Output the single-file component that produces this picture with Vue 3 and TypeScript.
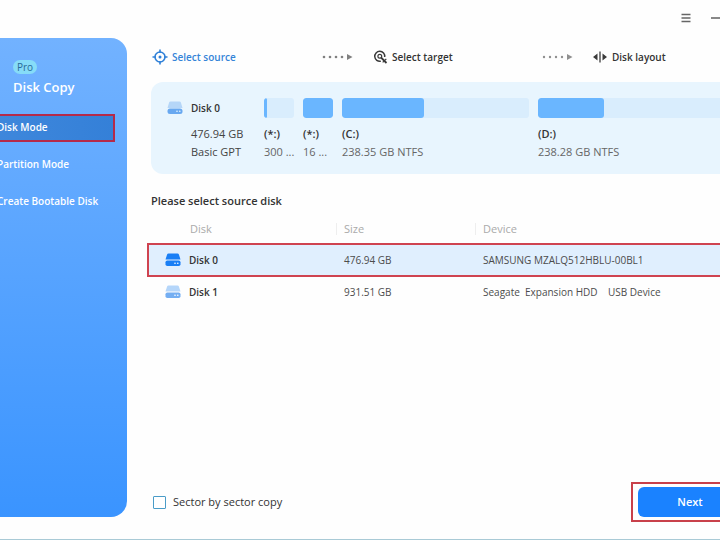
<script setup lang="ts">
import { ref } from 'vue'

interface Partition {
  letter: string
  size: string
  used: number
  kind: 'small' | 'medium' | 'large'
}

interface Disk {
  name: string
  size: string
  device: string
}

const modes = ['Disk Mode', 'Partition Mode', 'Create Bootable Disk']
const activeMode = ref(0)

const partitions: Partition[] = [
  { letter: '(*:)', size: '300 ...', used: 9, kind: 'small' },
  { letter: '(*:)', size: '16 ...', used: 100, kind: 'small' },
  { letter: '(C:)', size: '238.35 GB NTFS', used: 44, kind: 'medium' },
  { letter: '(D:)', size: '238.28 GB NTFS', used: 35, kind: 'large' },
]

const disks: Disk[] = [
  { name: 'Disk 0', size: '476.94 GB', device: 'SAMSUNG MZALQ512HBLU-00BL1' },
  { name: 'Disk 1', size: '931.51 GB', device: 'Seagate  Expansion HDD    USB Device' },
]
const selected = ref(0)
const sectorCopy = ref(false)
</script>

<template>
  <div class="window">
    <header class="titlebar">
      <button class="win-btn" aria-label="Menu">
        <svg width="10" height="10" viewBox="0 0 10 10"><path d="M0.5 1.5h9M0.5 5h9M0.5 8.5h9" stroke="#666" stroke-width="1.3" /></svg>
      </button>
      <button class="win-btn" aria-label="Minimize">
        <svg width="12" height="10" viewBox="0 0 12 10"><path d="M0 5h12" stroke="#888" stroke-width="2" /></svg>
      </button>
    </header>

    <div class="body">
      <aside class="sidebar">
        <div class="brand">
          <span class="badge">Pro</span>
          <h1>Disk Copy</h1>
        </div>
        <nav>
          <button
            v-for="(mode, i) in modes"
            :key="mode"
            class="mode"
            :class="{ active: activeMode === i }"
            @click="activeMode = i"
          >{{ mode }}</button>
        </nav>
      </aside>

      <main class="main">
        <ol class="steps">
          <li class="step current">
            <svg width="16" height="16" viewBox="0 0 16 16" fill="none" stroke="#2f80d8" stroke-width="1.6">
              <circle cx="8" cy="8" r="5" />
              <circle cx="8" cy="8" r="1.5" fill="#2f80d8" stroke="none" />
              <path d="M8 0.5v3.500M8 12v3.500M0.500 8h3.500M12 8h3.500" />
            </svg>
            <span>Select source</span>
            <svg class="arrow" width="32" height="8" viewBox="0 0 32 8" fill="#808080" aria-hidden="true">
              <circle cx="3" cy="4" r="1.300" /><circle cx="9" cy="4" r="1.300" /><circle cx="15" cy="4" r="1.300" /><circle cx="21" cy="4" r="1.300" />
              <path d="M26 1l5.500 3-5.500 3z" />
            </svg>
          </li>
          <li class="step">
            <svg width="16" height="16" viewBox="0 0 16 16" fill="none" stroke="#3a3a3a" stroke-width="1.5">
              <path d="M8.800 12.200A5 5 0 1 1 12.700 8" />
              <circle cx="7.800" cy="7.200" r="1.900" stroke-width="1.200" />
              <path d="M9 8.500l5.500 5.500" stroke-width="1.800" />
              <path d="M14.300 9.800l-3.600 3.600" stroke-width="1.200" />
            </svg>
            <span>Select target</span>
            <svg class="arrow" width="32" height="8" viewBox="0 0 32 8" fill="#909090" aria-hidden="true">
              <circle cx="3" cy="4" r="1.200" /><circle cx="9" cy="4" r="1.200" /><circle cx="15" cy="4" r="1.200" /><circle cx="21" cy="4" r="1.200" />
              <path d="M26 1l5.500 3-5.500 3z" />
            </svg>
          </li>
          <li class="step">
            <svg width="16" height="16" viewBox="0 0 16 16">
              <path d="M5.500 4.500v7L1 8zM10.500 4.500v7L15 8z" fill="#3a3a3a" />
              <path d="M8 2.500v11" stroke="#3a3a3a" stroke-width="1.300" />
            </svg>
            <span>Disk layout</span>
          </li>
        </ol>

        <section class="overview">
          <div class="disk-info">
            <svg width="16" height="14" viewBox="0 0 16 14">
              <path d="M3.500 0.500h9a1.500 1.500 0 0 1 1.400 1.100L15.500 7H0.500L2.100 1.600A1.500 1.500 0 0 1 3.500 0.500z" fill="#b5d6f8" />
              <rect x="0.500" y="7.500" width="15" height="5.500" rx="2.500" fill="#68a8f0" />
              <circle cx="10" cy="10.300" r="0.800" fill="#e8f5fe" /><circle cx="12.800" cy="10.300" r="0.800" fill="#e8f5fe" />
            </svg>
            <strong class="disk-name">Disk 0</strong>
            <span class="detail total">476.94 GB</span>
            <span class="detail">Basic GPT</span>
          </div>
          <div v-for="(p, i) in partitions" :key="i" class="partition" :class="p.kind">
            <div class="bar"><div class="fill" :style="{ width: p.used + '%' }"></div></div>
            <span class="letter">{{ p.letter }}</span>
            <span class="detail">{{ p.size }}</span>
          </div>
        </section>

        <h2>Please select source disk</h2>
        <table class="disks">
          <thead>
            <tr><th class="col-disk">Disk</th><th class="col-size"><span>Size</span></th><th><span>Device</span></th></tr>
          </thead>
          <tbody>
            <tr v-for="(d, i) in disks" :key="d.name" :class="{ selected: selected === i }" @click="selected = i">
              <td>
                <div class="name-cell">
                  <svg width="16" height="14" viewBox="0 0 16 14">
                    <path class="lid" d="M3.500 0.500h9a1.500 1.500 0 0 1 1.400 1.100L15.500 6.500H0.500L2.100 1.600A1.500 1.500 0 0 1 3.500 0.500z" />
                    <rect class="base" x="0.500" y="7.500" width="15" height="5.500" rx="1.800" />
                    <circle cx="10" cy="10.300" r="0.800" fill="#fff" /><circle cx="12.800" cy="10.300" r="0.800" fill="#fff" />
                  </svg>
                  {{ d.name }}
                </div>
              </td>
              <td>{{ d.size }}</td>
              <td class="device">{{ d.device }}</td>
            </tr>
          </tbody>
        </table>

        <footer class="footer">
          <label class="sector"><input v-model="sectorCopy" type="checkbox" />Sector by sector copy</label>
          <div class="next-frame"><button class="next">Next</button></div>
        </footer>
      </main>
    </div>
  </div>
</template>

<style>
body {
  overflow: hidden;
  background: #fefefe;
}
</style>

<style scoped>
* {
  box-sizing: border-box;
}
button {
  font: inherit;
  border: 0;
  background: none;
  cursor: pointer;
}
svg {
  display: block;
  flex: none;
}
.window {
  display: flex;
  flex-direction: column;
  min-height: 100vh;
  margin: 0 -29px 0 -20px;
  border-bottom: 1px solid #a9cad6;
  background: #fefefe;
  color: #333;
  font-family: "Open Sans", "Noto Sans", sans-serif;
  font-size: 11px;
  line-height: 18px;
}
.titlebar {
  display: flex;
  justify-content: flex-end;
  align-items: center;
  gap: 20px;
  height: 38px;
  padding: 0 26px 2px 0;
}
.win-btn {
  padding: 0;
}
.body {
  display: flex;
  flex: 1;
}
.sidebar {
  width: 147px;
  margin-bottom: 22px;
  border-radius: 0 16px 16px 0;
  background: linear-gradient(#72b2ff, #3a94ff);
  color: #fff;
}
.brand {
  padding: 22px 0 0 33px;
}
.badge {
  display: block;
  width: 24px;
  border-radius: 7px;
  background: #86dcf8;
  color: #286a98;
  font-size: 10px;
  line-height: 14px;
  text-align: center;
}
h1 {
  margin: 2px 0 0;
  font-size: 13px;
  font-weight: 600;
  line-height: 22px;
}
nav {
  display: flex;
  flex-direction: column;
  gap: 11px;
  padding: 17px 13px 0 0;
}
.mode {
  height: 26px;
  padding: 0 0 2px 17px;
  color: #fff;
  font-size: 10px;
  font-weight: 600;
  text-align: left;
  white-space: nowrap;
}
.mode.active {
  background: linear-gradient(90deg, #4088dc, #3480d8);
  outline: 2px solid #b52a4a;
  outline-offset: -1px;
}
.main {
  display: flex;
  flex: 1;
  flex-direction: column;
  min-width: 0;
  padding-left: 24px;
}
.steps {
  display: grid;
  grid-template-columns: 220px 220px 1fr;
  margin: 0;
  padding: 10px 0 0 1px;
  list-style: none;
}
.step {
  display: flex;
  align-items: center;
  gap: 4px;
  font-size: 10px;
  font-weight: 600;
  white-space: nowrap;
}
.current {
  color: #3584d8;
}
.arrow {
  margin: 0 19px 0 auto;
}
.overview {
  display: flex;
  gap: 9px;
  margin: 16px 7px 0 0;
  padding: 16px 16px 13px;
  border-radius: 12px;
  background: #e8f5fe;
}
.disk-info {
  display: grid;
  grid-template-columns: 16px 64px;
  grid-template-rows: 20px;
  column-gap: 8px;
  align-items: center;
}
.disk-name {
  font-size: 10px;
  font-weight: 600;
}
.disk-info .detail {
  grid-column: 2;
  color: #444;
}
.disk-info .total {
  margin-top: 7px;
}
.detail {
  color: #666;
  white-space: nowrap;
}
.partition {
  display: flex;
  flex-direction: column;
}
.small {
  width: 30px;
}
.medium {
  width: 187px;
}
.large {
  flex: 1;
}
.bar {
  height: 20px;
  margin-bottom: 7px;
  border-radius: 3px;
  background: #d9edfd;
  overflow: hidden;
}
.fill {
  height: 100%;
  border-radius: 3px;
  background: #6ab6ff;
}
.letter {
  font-weight: 600;
}
h2 {
  margin: 18px 0 0;
  font-size: 11px;
  font-weight: 600;
  line-height: 18px;
}
.disks {
  width: calc(100% + 3px);
  margin: 8px 0 0 -3px;
  border-collapse: collapse;
  table-layout: fixed;
  text-align: left;
}
th {
  height: 26px;
  padding: 0 0 4px;
  color: #aaa;
  font-weight: 400;
}
th span {
  display: block;
  padding-left: 7px;
  border-left: 1px solid #eee;
  line-height: 12px;
}
.col-disk {
  width: 188px;
  padding-left: 42px;
}
.col-size {
  width: 139px;
}
td {
  height: 32px;
  padding: 0 0 0 8px;
  color: #4c4c4c;
  font-size: 10px;
}
td:first-child {
  padding-left: 17px;
}
.name-cell {
  display: flex;
  align-items: center;
  gap: 8px;
  color: #333;
  font-weight: 600;
}
.device {
  white-space: pre;
}
.selected {
  background: #e0effe;
  outline: 2px solid #cf4350;
  outline-offset: -1px;
}
.lid {
  fill: #b5d6fa;
}
.base {
  fill: #74aef2;
}
.selected .lid,
.selected .base {
  fill: #1a7ff5;
}
.footer {
  display: flex;
  align-items: center;
  justify-content: space-between;
  margin-top: auto;
  padding-bottom: 17px;
}
.sector {
  display: flex;
  align-items: center;
  gap: 7px;
  padding-left: 2px;
}
.sector input {
  appearance: none;
  width: 13px;
  height: 13px;
  margin: 0;
  border: 1px solid #4a9cc8;
  border-radius: 1px;
  background: #fff;
}
.sector input:checked {
  background: #1a80ff;
}
.next-frame {
  padding: 3px 5px;
  border: 2px solid #c8404a;
}
.next {
  width: 104px;
  height: 30px;
  border-radius: 6px;
  background: #1a82ff;
  color: #fff;
  font-size: 11px;
  font-weight: 600;
}
</style>
